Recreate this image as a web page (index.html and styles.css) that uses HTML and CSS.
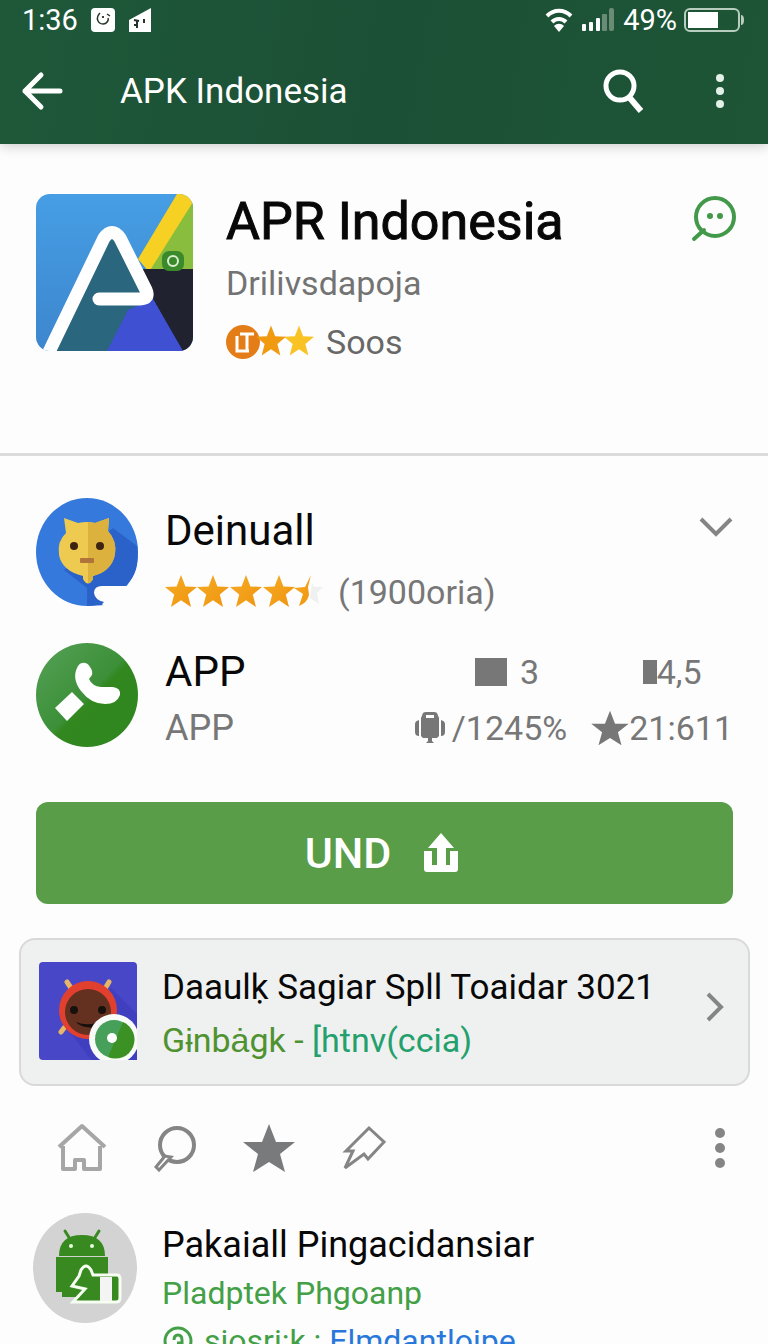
FILE: index.html
```html
<!DOCTYPE html>
<html lang="id">
<head>
<meta charset="utf-8">
<meta name="viewport" content="width=device-width, initial-scale=1">
<title>APK Indonesia</title>
<link rel="stylesheet" href="styles.css">
</head>
<body>
<svg class="defs" width="0" height="0" aria-hidden="true">
  <defs>
    <linearGradient id="gold" x1="0" y1="0" x2="1" y2="1"><stop offset="0" stop-color="#f5ab24"/><stop offset="1" stop-color="#f0940f"/></linearGradient>
    <symbol id="star" viewBox="0 0 32 32"><path d="M16 0l4.400 11.400L32 12l-9.200 7.600L26 32l-10-6.800L6 32l3.200-12.400L0 12l11.600-.6z"/></symbol>
  </defs>
</svg>

<header class="header">
  <div class="status">
    <span class="status-time">1:36</span>
    <svg class="status-app" viewBox="0 0 24 24"><rect x="0" y="0" width="24" height="24" rx="4" fill="#fff"/><path d="M9 5c-5 5-2 11 3 11 4 0 6-4 5-6M16 6l3 2" fill="none" stroke="#26332b" stroke-width="1.500"/><circle cx="12" cy="9" r="1"/></svg>
    <svg class="status-app" viewBox="0 0 24 24"><path d="M1 12L23 0v24H1z" fill="#fff"/><path d="M6 12l5 1M9 12v8M6 17h4M16 11v4" fill="none" stroke="#26332b" stroke-width="2"/></svg>
    <span class="status-right">
      <svg class="wifi" viewBox="0 0 28 24"><path d="M2 8c7-7 17-7 24 0M7 14c4-4 10-4 14 0" fill="none" stroke="#fff" stroke-width="4"/><path d="M9 18c3-3 7-3 10 0l-5 6z" fill="#fff"/></svg>
      <svg class="signal" viewBox="0 0 34 24"><g fill="#fff"><rect x="1" y="16" width="4" height="7" rx="1"/><rect x="8" y="14" width="4" height="9" rx="1"/><rect x="15" y="10" width="4" height="13" rx="1"/></g><g fill="#6a8c76"><rect x="21" y="6" width="5" height="17" rx="1"/><rect x="28" y="0" width="5" height="23" rx="2"/></g></svg>
      <span class="status-percent">49%</span>
      <svg class="battery" viewBox="0 0 60 24"><rect x="1" y="1" width="54" height="22" rx="5" fill="none" stroke="#b9cdbf" stroke-width="2"/><rect x="4" y="4" width="30" height="16" fill="#fff"/><path d="M57 7q3 0 3 5t-3 5z" fill="#b9cdbf"/></svg>
    </span>
  </div>
  <nav class="appbar" aria-label="Utama">
    <button class="icon-button" type="button" aria-label="Kembali"><svg width="42" height="40" viewBox="0 0 42 40"><path d="M20 4L4 20l16 16M4 20h35" fill="none" stroke="#fff" stroke-width="5" stroke-linecap="round" stroke-linejoin="round"/></svg></button>
    <h1 class="appbar-title">APK Indonesia</h1>
    <button class="icon-button" type="button" aria-label="Cari"><svg width="42" height="46" viewBox="0 0 42 46"><circle cx="17" cy="18" r="14" fill="none" stroke="#fff" stroke-width="5"/><path d="M26 29l12 14" stroke="#fff" stroke-width="6"/></svg></button>
    <button class="icon-button appbar-more" type="button" aria-label="Menu"><svg width="10" height="36" viewBox="0 0 10 36"><g fill="#e4f1e8"><circle cx="5" cy="5" r="4"/><circle cx="5" cy="18" r="4"/><circle cx="5" cy="31" r="4"/></g></svg></button>
  </nav>
</header>

<main>
  <section class="hero">
    <svg class="hero-icon" viewBox="0 0 157 157" role="img" aria-label="Ikon APR Indonesia">
      <defs><clipPath id="tile"><rect width="157" height="157" rx="14"/></clipPath><linearGradient id="sky" x1="0" y1="0" x2="0" y2="1"><stop offset="0" stop-color="#469ee4"/><stop offset="1" stop-color="#3d86ce"/></linearGradient></defs>
      <g clip-path="url(#tile)">
        <rect width="157" height="157" fill="url(#sky)"/>
        <path d="M156 5L108 86v-9h49V0z" fill="#88bd3e"/>
        <path d="M141 0h16v8l-44 70-11-13z" fill="#f6d022"/>
        <path d="M100 75h57v82h-11z" fill="#20222f"/>
        <path d="M75 40L15 157h60l42-50z" fill="#2b667f"/>
        <path d="M117 105l30 52H71l21-41z" fill="#3f50d2"/>
        <rect x="126" y="57" width="22" height="20" rx="7" fill="#3a8a2c"/>
        <circle cx="137" cy="67" r="5" fill="none" stroke="#d9efd0" stroke-width="2"/>
        <path d="M12 160L68 44q8-11 16 0l26 52q4 9-6 9H63" fill="none" stroke="#fff" stroke-width="13" stroke-linecap="round" stroke-linejoin="round"/>
      </g>
    </svg>
    <div class="hero-text">
      <h2 class="hero-title">APR Indonesia</h2>
      <p class="hero-sub">Drilivsdapoja</p>
      <p class="hero-rating">
        <svg width="88" height="38" viewBox="0 0 88 38" aria-hidden="true"><circle cx="17" cy="19" r="17" fill="#e47c17"/><path d="M11 13v15h12M14 11h14M21 11v17" fill="none" stroke="#fff" stroke-width="3"/><use href="#star" x="30" y="2" width="30" height="31" fill="#f09a10"/><use href="#star" x="58" y="2" width="30" height="31" fill="#fac325"/></svg>
        <span>Soos</span>
      </p>
    </div>
    <button class="icon-button" type="button" aria-label="Komentar"><svg width="46" height="48" viewBox="0 0 46 48"><circle cx="24" cy="23" r="19" fill="none" stroke="#43994a" stroke-width="4"/><path d="M3 45l10-9" stroke="#43994a" stroke-width="4" stroke-linecap="round"/><g fill="#43994a"><circle cx="19" cy="22" r="3"/><circle cx="29" cy="22" r="3"/></g></svg></button>
  </section>

  <section class="details">
    <div class="row">
      <svg class="avatar" viewBox="0 0 102 108" aria-hidden="true">
        <ellipse cx="51" cy="54" rx="51" ry="54" fill="#3679dd"/>
        <path d="M51 108V90L28 72l49-42 24 18q4 28-13 41l-18 18z" fill="#2a62ca"/>
        <path d="M69 108q-5-1-1-4-9-2-10-9 0-7 8-7h36v20z" fill="#fdfdfd"/>
        <path d="M28 20l14 5q9-2 17 0l14-5-1 13q9 10 7 23-3 17-22 22v3q-5 9-10 0v-3Q26 73 23 57q-2-14 7-22z" fill="#eecb50"/>
        <path d="M52 24l7 1 14-5-1 13q9 10 7 23-3 17-22 22v3q-2 4-5 4z" fill="#dcb13d"/>
        <g fill="#3d2411"><circle cx="38" cy="48" r="4"/><circle cx="64" cy="48" r="4"/></g><rect x="44" y="60" width="14" height="5" rx="1" fill="#b0743a"/>
      </svg>
      <div class="row-text">
        <h3 class="row-title">Deinuall</h3>
        <p class="row-rating">
          <svg width="158" height="34" viewBox="0 0 158 34" role="img" aria-label="4,5 bintang"><g fill="url(#gold)"><use href="#star" width="32" height="32"/><use href="#star" width="32" height="32" x="32"/><use href="#star" width="32" height="32" x="65"/><use href="#star" width="32" height="32" x="98"/><path d="M146 0l-3 12 1 8q-2 8-10 11l4-12-9-6 11-1z"/></g><path d="M147 8l2 4h9l-6 6 2 11-9-6z" fill="#f0f0f0"/></svg>
          <span>(1900oria)</span>
        </p>
      </div>
      <button class="icon-button row-toggle" type="button" aria-label="Buka"><svg width="34" height="22" viewBox="0 0 34 22"><path d="M2 3l15 15L32 3" fill="none" stroke="#858585" stroke-width="4"/></svg></button>
    </div>

    <div class="row">
      <svg class="avatar" viewBox="0 0 102 104" aria-hidden="true">
        <defs><linearGradient id="leaf" x1="0" y1="0" x2="1" y2="1"><stop offset="0" stop-color="#56a058"/><stop offset=".5" stop-color="#3c9038"/><stop offset=".55" stop-color="#32871f"/><stop offset="1" stop-color="#2f8720"/></linearGradient></defs>
        <ellipse cx="51" cy="52" rx="51" ry="52" fill="url(#leaf)"/>
        <path d="M46 20q5-1 8 4 3 4 2 8l-3 4q3 7 12 8h12q8 1 7 8-3 9-15 9-14 0-24-13-10-13-3-25 2-3 4-3zM36 49l12 12-17 17-12-13z" fill="#fff"/>
      </svg>
      <div class="row-text">
        <h3 class="row-title row-title-second">APP</h3>
        <p class="row-sub">APP</p>
      </div>
      <div class="stats">
        <span class="stat stat-spaced"><svg width="32" height="28" viewBox="0 0 32 28" aria-hidden="true"><path d="M0 0h32v28H0z"/></svg>3</span>
        <span class="stat stat-indent"><svg width="14" height="24" viewBox="0 0 14 24" aria-hidden="true"><path d="M0 0h14v24H0z"/></svg>4,5</span>
        <span class="stat stat-near"><svg width="30" height="32" viewBox="0 0 30 32" aria-hidden="true"><path fill-rule="evenodd" d="M8 1q1-1 3-1h8q2 0 3 1l2 5v18l-2 2h-5v3l2 2h-8l2-2v-3H8l-2-2V6zM11 3v3h8V3zM4 8v16q-4 0-4-4v-8q0-3 4-4zM26 8v16q4 0 4-4v-8q0-3-4-4z"/></svg>/1245%</span>
        <span class="stat"><svg width="38" height="36" viewBox="0 0 52 50" aria-hidden="true"><path d="M26 1l7 18h19L37 31l5 18-16-10-16 10 5-18L0 19h19z"/></svg>21:611</span>
      </div>
    </div>

    <button class="primary" type="button">UND
      <svg width="34" height="40" viewBox="0 0 34 40" aria-hidden="true"><path d="M17 0l13 15h-8v17h4V18h8v18q0 3-3 3H3q-3 0-3-3V18h8v14h5V15H4z" fill="#fff"/></svg>
    </button>
  </section>

  <a class="card" href="#detail">
    <svg class="card-icon" viewBox="0 0 98 98" aria-hidden="true">
      <rect width="98" height="98" rx="4" fill="#4747c8"/>
      <path d="M28 66L72 26l26 26v46H52z" fill="#3f3fc0"/>
      <g stroke="#e6b568" stroke-width="5" stroke-linecap="round"><path d="M28 20l4 6M70 20l-3 5M25 66l-3 4"/></g>
      <circle cx="49" cy="48" r="29" fill="#e2402f"/><circle cx="49" cy="50" r="23" fill="#643020"/>
      <g fill="#18100c"><circle cx="35" cy="48" r="4"/><circle cx="63" cy="48" r="4"/><path d="M37 60q10 4 20 1v4q-14 2-20-5z"/></g>
      <circle cx="75" cy="77" r="25" fill="#f8fbf7"/><circle cx="75" cy="77" r="19" fill="#46a05a"/><path d="M84 60a19 19 0 0 1-15 35z" fill="#3c9124"/><circle cx="73" cy="76" r="5" fill="#fff"/>
    </svg>
    <span class="card-text">
      <span class="card-title">Daaulḳ Sagiar Spll Toaidar 3021</span>
      <span class="card-sub"><span class="olive">Gɨnbȧgk -</span> <span class="teal">[htnv(ccia)</span></span>
    </span>
    <svg class="card-arrow" width="18" height="30" viewBox="0 0 18 30" aria-hidden="true"><path d="M2 2l13 13L2 28" fill="none" stroke="#858585" stroke-width="4"/></svg>
  </a>

  <div class="tools">
    <button class="icon-button" type="button" aria-label="Beranda"><svg width="50" height="50" viewBox="0 0 50 50"><path d="M2 24L25 3l23 21M6 23v23h12v-9h9v9h16V23" fill="none" stroke="#a6a6a6" stroke-width="4" stroke-linejoin="round"/></svg></button>
    <button class="icon-button" type="button" aria-label="Cari"><svg width="42" height="48" viewBox="0 0 42 48"><circle cx="23" cy="21" r="17" fill="none" stroke="#858585" stroke-width="4"/><path d="M11 32L2 43l3 3 12-13z" fill="#fdfdfd" stroke="#858585" stroke-width="3"/></svg></button>
    <button class="icon-button" type="button" aria-label="Favorit"><svg width="52" height="50" viewBox="0 0 52 50"><path d="M26 1l7 18h19L37 31l5 18-16-10-16 10 5-18L0 19h19z" fill="#787a7b"/></svg></button>
    <button class="icon-button" type="button" aria-label="Sematkan"><svg width="44" height="46" viewBox="0 0 44 46"><path d="M27 3L4 26h7L3 43l19-14 4 5 16-17z" fill="none" stroke="#858585" stroke-width="3"/></svg></button>
    <button class="icon-button tools-more" type="button" aria-label="Lainnya"><svg width="12" height="42" viewBox="0 0 12 42"><g fill="#858585"><circle cx="6" cy="6" r="5"/><circle cx="6" cy="21" r="5"/><circle cx="6" cy="36" r="5"/></g></svg></button>
  </div>

  <article class="item">
    <svg class="item-icon" viewBox="0 0 104 110" aria-hidden="true">
      <ellipse cx="52" cy="55" rx="52" ry="55" fill="#d3d3d3"/>
      <path d="M26 43q0-21 23-21t23 21z" fill="#38891f"/><path d="M32 18l5 8M66 18l-5 8" stroke="#38891f" stroke-width="3" stroke-linecap="round"/>
      <g fill="#e8ffe0"><circle cx="38" cy="33" r="2"/><circle cx="59" cy="33" r="2"/></g>
      <path d="M23 44h52v40H29v-5h-6z" fill="#38891f"/>
      <path d="M46 63l2-6q5-8 10 0l2 5h24q3 0 3 4v19q0 4-4 4H40l12-13-13-3z" fill="#38891f" stroke="#f6fff2" stroke-width="3"/><path d="M67 64h12v24H67z" fill="#f4f4f4"/>
    </svg>
    <div class="item-text">
      <h3 class="item-title">Pakaiall Pingacidansiar</h3>
      <p class="item-sub">Pladptek Phgoanp</p>
      <p class="item-sub item-meta"><svg width="32" height="32" viewBox="0 0 32 32" aria-hidden="true"><circle cx="16" cy="16" r="13" fill="none" stroke="#43a047" stroke-width="3"/><path d="M12 15q0-5 4-5t4 5v3h-5" fill="none" stroke="#43a047" stroke-width="3"/></svg><span>siosri:k : <a href="#pengembang">Elmdantloipe</a></span></p>
    </div>
  </article>
</main>
</body>
</html>
```
FILE: styles.css
```css
* { box-sizing: border-box; }
html { scrollbar-width: none; }
body { margin: 0; background: #fdfdfd; color: #080808; font-family: Roboto, "Liberation Sans", sans-serif; }
h1, h2, h3, p { margin: 0; font-weight: 400; }
svg { display: block; flex: none; }
.defs { position: absolute; }
.icon-button { display: grid; place-items: center; padding: 0; border: 0; background: none; cursor: pointer; }

.header { background: linear-gradient(100deg, #1e5839, #1c5036 50%, #1d5536); color: #fff; box-shadow: 0 2px 12px rgba(0, 0, 0, .2); }
.status { display: flex; align-items: center; height: 40px; padding: 0 24px 0 22px; font-size: 29px; }
.status-app { width: 24px; height: 24px; margin-left: 13px; }
.status-right { display: flex; align-items: center; margin-left: auto; }
.wifi { width: 28px; height: 24px; margin-right: 8px; }
.signal { width: 34px; height: 24px; margin-right: 8px; }
.battery { width: 60px; height: 24px; margin-left: 7px; }
.appbar { display: flex; align-items: center; height: 104px; padding: 0 43px 2px 21px; }
.appbar-title { flex: 1; margin-left: 57px; font-size: 35px; }
.appbar-more { margin-left: 70px; }

.hero { display: flex; align-items: flex-start; padding: 50px 31px 86px 36px; border-bottom: 3px solid #dcdcdc; }
.hero-icon { width: 157px; height: 157px; }
.hero-text { flex: 1; margin-left: 33px; }
.hero-title { font-size: 52px; line-height: 56px; -webkit-text-stroke: 1px #080808; }
.hero-sub { margin-top: 8px; font-size: 34px; line-height: 50px; color: #737373; }
.hero-rating { display: flex; align-items: center; gap: 12px; margin-top: 9px; font-size: 34px; line-height: 50px; color: #686868; }

.details { padding: 42px 35px 0 36px; }
.row { display: flex; align-items: flex-start; }
.row + .row { margin-top: 26px; }
.avatar { width: 102px; }
.row-text { flex: 1; margin-left: 27px; }
.row-title { margin-top: 8px; font-size: 42px; line-height: 50px; }
.row-title-second { margin-top: 4px; }
.row-rating { display: flex; align-items: center; gap: 15px; margin-top: 11px; font-size: 34px; line-height: 50px; color: #777; }
.row-sub { margin-top: 6px; font-size: 36px; line-height: 50px; color: #777; }
.row-toggle { margin-top: 18px; }
.stats { display: grid; grid-template-columns: auto auto; justify-items: center; column-gap: 24px; row-gap: 6px; margin-top: 4px; color: #777; font-size: 34px; line-height: 50px; }
.stat { display: flex; align-items: center; fill: #777; }
.stat-spaced { gap: 13px; padding-left: 32px; }
.stat-indent { padding-left: 20px; }
.stat-near { gap: 7px; }
.primary { display: flex; align-items: center; justify-content: center; gap: 33px; width: 100%; height: 102px; margin-top: 49px; padding: 0 6px 0 0; border: 0; border-radius: 12px; background: #599d49; color: #fff; font: 500 43px Roboto, sans-serif; cursor: pointer; }

.card { display: flex; align-items: flex-start; margin: 34px 18px 0 19px; padding: 22px 24px 18px 18px; border: 2px solid #d8d9d9; border-radius: 16px; background: #eff0f0; color: inherit; text-decoration: none; }
.card-icon { width: 98px; height: 98px; }
.card-text { display: grid; flex: 1; margin-left: 25px; line-height: 52px; }
.card-title { font-size: 35px; }
.card-sub { font-size: 34px; }
.card-arrow { margin-top: 30px; }
.olive { color: #4f9230; }
.teal { color: #23a06c; }

.tools { display: flex; align-items: center; gap: 47px; padding: 37px 42px 35px 57px; }
.tools-more { margin-left: auto; }

.item { display: flex; align-items: flex-start; padding: 5px 30px 30px 33px; }
.item-icon { width: 104px; height: 110px; }
.item-text { flex: 1; margin-left: 25px; }
.item-title { margin-top: 8px; font-size: 36px; line-height: 48px; }
.item-sub { font-size: 32px; line-height: 48px; color: #43a047; }
.item-meta { display: flex; align-items: center; gap: 10px; }
.item-meta a { color: #2878dc; text-decoration: none; }
```
